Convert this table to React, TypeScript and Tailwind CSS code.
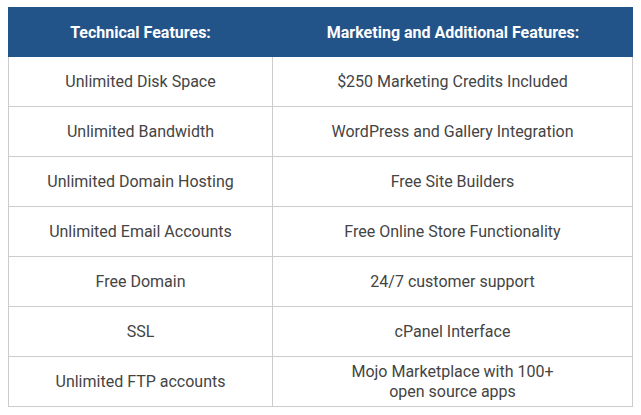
import React from "react";

const rows: [string, React.ReactNode][] = [
  ["Unlimited Disk Space", "$250 Marketing Credits Included"],
  ["Unlimited Bandwidth", "WordPress and Gallery Integration"],
  ["Unlimited Domain Hosting", "Free Site Builders"],
  ["Unlimited Email Accounts", "Free Online Store Functionality"],
  ["Free Domain", "24/7 customer support"],
  ["SSL", "cPanel Interface"],
  [
    "Unlimited FTP accounts",
    <>
      Mojo Marketplace with 100+
      <br />
      open source apps
    </>,
  ],
];

export default function App() {
  return (
    <div className="w-[641px] h-[415px] bg-white pt-[7px] pl-[8px]" style={{ fontFamily: "Roboto, sans-serif" }}>
      <div className="w-[625px] flex flex-col">
        <div className="flex h-[50px] bg-[#22548a] text-white font-bold text-[16px] pt-[1px]">
          <div className="w-[265px] flex items-center justify-center">Technical Features:</div>
          <div className="flex-1 flex items-center justify-center">Marketing and Additional Features:</div>
        </div>
        <div className="border-l border-r border-[#cccccc] text-[#444444] text-[16px] leading-[20px]">
          {rows.map(([a, b], i) => (
            <div key={i} className="flex h-[50px] border-b border-[#cccccc]">
              <div className="w-[264px] border-r border-[#cccccc] flex items-center justify-center text-center pt-[1px]">{a}</div>
              <div className="flex-1 flex items-center justify-center text-center pt-[1px]">{b}</div>
            </div>
          ))}
        </div>
      </div>
    </div>
  );
}
